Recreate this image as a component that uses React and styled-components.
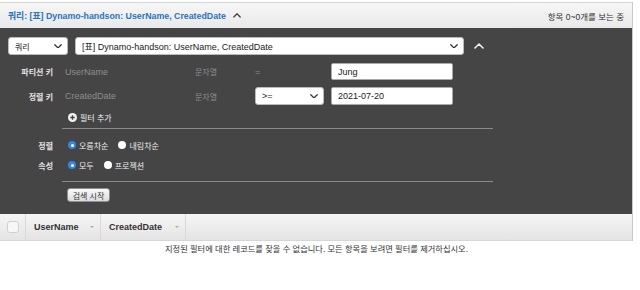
import React from 'react';
import styled, { createGlobalStyle } from 'styled-components';

const GlobalStyle = createGlobalStyle`
  html, body {
    margin: 0;
    padding: 0;
    background: #fff;
  }
  body {
    font-family: "Liberation Sans", "Noto Sans CJK KR", sans-serif;
    color: #333;
  }
`;

const Page = styled.div`
  padding-top: 2px;
  width: 633px;
`;

const Frame = styled.div`
  border-right: 1px solid #c8c8c8;
`;

const TitleBar = styled.div`
  height: 25px;
  border-top: 1px solid #d4d4d4;
  background: linear-gradient(#f6f6f6, #e9e9e9);
  display: flex;
  align-items: center;
  justify-content: space-between;
  padding: 0 8px;
`;

const Title = styled.div`
  display: flex;
  align-items: center;
  gap: 7px;
  color: #2a74c2;
  font-weight: bold;
  font-size: 8.8px;
`;

const Viewing = styled.div`
  font-size: 8.5px;
  color: #333;
`;

const Panel = styled.div`
  background: #454545;
  padding: 9px 0 12px 8px;
  display: flex;
  flex-direction: column;
`;

const Row = styled.div`
  display: flex;
  align-items: center;
  height: ${(p) => p.$h || 18}px;
  margin-top: ${(p) => p.$mt || 0}px;
`;

const SelectBox = styled.div`
  box-sizing: border-box;
  width: ${(p) => p.$w}px;
  height: 18px;
  background: #fff;
  border: 1px solid #bbb;
  border-radius: 3px;
  display: flex;
  align-items: center;
  justify-content: space-between;
  padding: 0 5px 0 6px;
  font-size: ${(p) => p.$fs || 9}px;
  color: #222;
  margin-right: ${(p) => p.$mr || 0}px;
`;

const KeyLabel = styled.div`
  width: 45px;
  margin-right: 12px;
  text-align: right;
  font-size: 8px;
  font-weight: bold;
  color: #e2e2e2;
  white-space: nowrap;
`;

const FieldName = styled.div`
  width: ${(p) => p.$w}px;
  font-size: ${(p) => p.$fs || 9}px;
  color: #8d8d8d;
`;

const TextInput = styled.input`
  box-sizing: border-box;
  width: 122px;
  height: ${(p) => p.$h || 17}px;
  border: 1px solid #aaa;
  border-radius: 2px;
  padding: 0 6px;
  font-family: "Liberation Sans", sans-serif;
  font-size: 9px;
  color: #222;
  background: #fff;
  outline: none;
`;

const Section = styled.div`
  margin-left: 54px;
  width: 431px;
  display: flex;
  flex-direction: column;
`;

const AddFilter = styled.div`
  display: flex;
  align-items: center;
  gap: 3px;
  height: 14px;
  padding-left: 6px;
  margin-top: 5px;
  font-size: 8px;
  color: #eee;
`;

const Rule = styled.div`
  height: 1px;
  background: #8a8a8a;
  margin-top: ${(p) => p.$mt || 0}px;
`;

const OptionRow = styled.div`
  display: flex;
  align-items: center;
  height: 14px;
  margin-top: ${(p) => p.$mt || 0}px;
`;

const OptionLabel = styled.div`
  width: 45px;
  margin-right: 15px;
  text-align: right;
  font-size: 8px;
  font-weight: bold;
  color: #e2e2e2;
`;

const Radio = styled.span`
  box-sizing: border-box;
  width: 8px;
  height: 8px;
  border-radius: 50%;
  margin-right: 3px;
  background: ${(p) => (p.$on ? '#2f86f0' : '#fff')};
  display: inline-flex;
  align-items: center;
  justify-content: center;
  &::after {
    content: '';
    width: 3px;
    height: 3px;
    border-radius: 50%;
    background: ${(p) => (p.$on ? '#fff' : 'transparent')};
  }
`;

const OptionText = styled.span`
  font-size: 8px;
  color: #eee;
  margin-right: ${(p) => p.$mr || 0}px;
`;

const StartButton = styled.div`
  box-sizing: border-box;
  margin: 6px 0 0 5px;
  width: 43px;
  height: 14px;
  border: 1px solid #8f8f8f;
  border-radius: 3px;
  background: linear-gradient(#fafafa, #dcdcdc);
  font-size: 8px;
  color: #333;
  display: flex;
  align-items: center;
  justify-content: center;
`;

const TableHead = styled.div`
  height: 26px;
  display: flex;
  align-items: stretch;
  background: linear-gradient(#f5f5f5, #e4e4e4);
  border-bottom: 1px solid #d6d6d6;
`;

const CheckCell = styled.div`
  width: 25px;
  display: flex;
  align-items: center;
  justify-content: center;
  border-right: 1px solid #d9d9d9;
`;

const CheckBox = styled.span`
  box-sizing: border-box;
  width: 12px;
  height: 12px;
  border: 1px solid #d0d0d0;
  border-radius: 3px;
  background: #f7f7f7;
`;

const HeadCell = styled.div`
  width: ${(p) => p.$w}px;
  box-sizing: border-box;
  padding: 0 6px 0 8px;
  display: flex;
  align-items: center;
  justify-content: space-between;
  border-right: 1px solid #d9d9d9;
  font-size: 9px;
  font-weight: bold;
  color: #333;
`;

const SortCaret = styled.span`
  width: 0;
  height: 0;
  border-left: 2px solid transparent;
  border-right: 2px solid transparent;
  border-top: 2px solid #aaa;
`;

const Empty = styled.div`
  text-align: center;
  font-size: 8.25px;
  color: #333;
  margin-top: 1px;
`;

const Chevron = ({ dir = 'down', color = '#333', size = 8 }) => (
  <svg width={size} height={size * 0.6} viewBox="0 0 10 6">
    <path
      d={dir === 'down' ? 'M1 1 L5 5 L9 1' : 'M1 5 L5 1 L9 5'}
      fill="none"
      stroke={color}
      strokeWidth="1.6"
      strokeLinecap="round"
      strokeLinejoin="round"
    />
  </svg>
);

const PlusCircle = () => (
  <svg width="9" height="9" viewBox="0 0 10 10">
    <circle cx="5" cy="5" r="5" fill="#f2f2f2" />
    <path d="M5 2.5 V7.5 M2.5 5 H7.5" stroke="#454545" strokeWidth="1.5" />
  </svg>
);

export default function App() {
  return (
    <Page>
      <GlobalStyle />
      <Frame>
        <TitleBar>
          <Title>
            쿼리: [표] Dynamo-handson: UserName, CreatedDate
            <Chevron dir="up" color="#444" size={8} />
          </Title>
          <Viewing>항목 0~0개를 보는 중</Viewing>
        </TitleBar>

        <Panel>
          <Row>
            <SelectBox $w={60} $mr={7} $fs={8}>
              쿼리
              <Chevron />
            </SelectBox>
            <SelectBox $w={389} $mr={10}>
              [표] Dynamo-handson: UserName, CreatedDate
              <Chevron />
            </SelectBox>
            <Chevron dir="up" color="#eee" size={10} />
          </Row>

          <Row $h={17} $mt={8}>
            <KeyLabel>파티션 키</KeyLabel>
            <FieldName $w={130}>UserName</FieldName>
            <FieldName $w={60} $fs={8}>문자열</FieldName>
            <FieldName $w={76}>=</FieldName>
            <TextInput readOnly value="Jung" />
          </Row>

          <Row $mt={7}>
            <KeyLabel>정렬 키</KeyLabel>
            <FieldName $w={130}>CreatedDate</FieldName>
            <FieldName $w={60} $fs={8}>문자열</FieldName>
            <SelectBox $w={69} $mr={7}>
              &gt;=
              <Chevron />
            </SelectBox>
            <TextInput readOnly value="2021-07-20" $h={18} />
          </Row>

          <Section>
            <AddFilter>
              <PlusCircle />
              필터 추가
            </AddFilter>
            <Rule $mt={4} />
          </Section>

          <OptionRow $mt={9}>
            <OptionLabel>정렬</OptionLabel>
            <Radio $on />
            <OptionText $mr={10}>오름차순</OptionText>
            <Radio />
            <OptionText>내림차순</OptionText>
          </OptionRow>
          <OptionRow $mt={6}>
            <OptionLabel>속성</OptionLabel>
            <Radio $on />
            <OptionText $mr={10}>모두</OptionText>
            <Radio />
            <OptionText>프로젝션</OptionText>
          </OptionRow>

          <Section>
            <Rule $mt={9} />
            <StartButton>검색 시작</StartButton>
          </Section>
        </Panel>

        <TableHead>
          <CheckCell>
            <CheckBox />
          </CheckCell>
          <HeadCell $w={75}>
            UserName
            <SortCaret />
          </HeadCell>
          <HeadCell $w={85}>
            CreatedDate
            <SortCaret />
          </HeadCell>
        </TableHead>
      </Frame>
      <Empty>지정된 필터에 대한 레코드를 찾을 수 없습니다. 모든 항목을 보려면 필터를 제거하십시오.</Empty>
    </Page>
  );
}
